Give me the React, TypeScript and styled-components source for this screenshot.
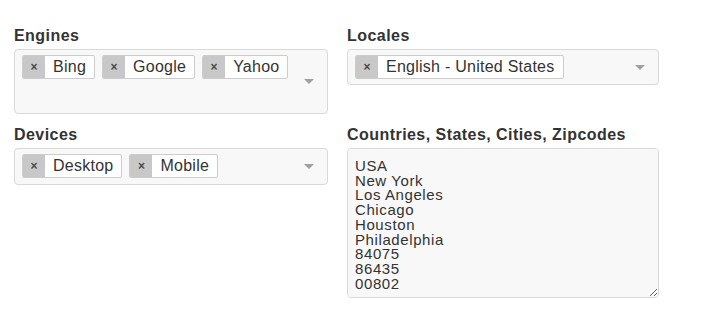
import React from 'react';
import styled, { createGlobalStyle } from 'styled-components';

const GlobalStyle = createGlobalStyle`
    body {
        margin: 0;
        background: #ffffff;
        font-family: "Liberation Sans", Arial, Helvetica, sans-serif;
        color: #333333;
    }
`

const Page = styled.div`
    display: grid;
    grid-template-columns: 314px 312px;
    column-gap: 19px;
    row-gap: 11px;
    align-items: start;
    padding: 26px 0 0 14px;
`
const Field = styled.div`
    display: flex;
    flex-flow: column;
`
const Label = styled.label`
    font-weight: 700;
    font-size: 16px;
    line-height: 20px;
    letter-spacing: 0.45px;
    color: #333333;
    margin-bottom: 3px;
`
const SelectBox = styled.div<{ $minHeight: number }>`
    display: flex;
    box-sizing: border-box;
    min-height: ${(p) => p.$minHeight}px;
    border: 1px solid #d9d9d9;
    border-radius: 4px;
    background-color: #f8f8f8;
`
const TagList = styled.div`
    flex: 1;
    display: flex;
    flex-wrap: wrap;
    align-content: flex-start;
    gap: 7px;
    padding: 5px 0 5px 7px;
`
const Tag = styled.span`
    display: inline-flex;
    box-sizing: border-box;
    height: 24px;
    border: 1px solid #cccccc;
    border-radius: 2px;
    background-color: #ffffff;
    overflow: hidden;
`
const Remove = styled.span`
    display: flex;
    align-items: center;
    justify-content: center;
    width: 22px;
    background-color: #c8c8c8;
    color: #4a4a4a;
    font-size: 12px;
    font-weight: 700;
`
const TagText = styled.span`
    padding: 0 8px;
    font-size: 16px;
    line-height: 22px;
    letter-spacing: 0.25px;
    color: #333333;
`
const Arrow = styled.span`
    align-self: center;
    width: 0;
    height: 0;
    margin: 0 13px 0 8px;
    border-left: 5px solid transparent;
    border-right: 5px solid transparent;
    border-top: 5px solid #a0a0a0;
`
const TextArea = styled.textarea`
    box-sizing: border-box;
    width: 312px;
    height: 150px;
    padding: 10px 7px;
    border: 1px solid #d9d9d9;
    border-radius: 4px;
    background-color: #f8f8f8;
    font-family: "Liberation Sans", Arial, Helvetica, sans-serif;
    font-size: 15px;
    line-height: 14.7px;
    letter-spacing: 0.6px;
    color: #333333;
    outline: none;
`

const MultiSelect = ({ items, minHeight }: { items: string[]; minHeight: number }) => (
    <SelectBox $minHeight={minHeight}>
        <TagList>
            {items.map((item) => (
                <Tag key={item}>
                    <Remove>×</Remove>
                    <TagText>{item}</TagText>
                </Tag>
            ))}
        </TagList>
        <Arrow />
    </SelectBox>
)

const places = ['USA', 'New York', 'Los Angeles', 'Chicago', 'Houston', 'Philadelphia', '84075', '86435', '00802'].join('\n')

function App() {
    return <>
        <GlobalStyle />
        <Page>
            <Field>
                <Label>Engines</Label>
                <MultiSelect items={['Bing', 'Google', 'Yahoo']} minHeight={65} />
            </Field>
            <Field>
                <Label>Locales</Label>
                <MultiSelect items={['English - United States']} minHeight={36} />
            </Field>
            <Field>
                <Label>Devices</Label>
                <MultiSelect items={['Desktop', 'Mobile']} minHeight={37} />
            </Field>
            <Field>
                <Label>Countries, States, Cities, Zipcodes</Label>
                <TextArea defaultValue={places} spellCheck={false} />
            </Field>
        </Page>
    </>
}

export default App;
